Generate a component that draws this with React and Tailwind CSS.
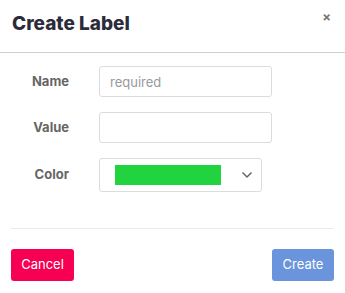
import React from "react";

function CreateLabel() {
  return (
    <div className="w-[345px] h-[293px] bg-white flex flex-col" style={{ fontFamily: "Inter, 'Noto Sans', sans-serif" }}>
      <header className="h-[53px] flex items-start justify-between border-b border-[#cfcfcf] pl-3 pr-[14px]">
        <h1 className="mt-[11px] text-[19px] leading-[26px] font-extrabold text-[#2c2b3b]">Create Label</h1>
        <button className="mt-[11px] text-[13px] leading-[13px] font-bold text-[#777]">×</button>
      </header>

      <main className="flex flex-col gap-[15px] pt-[13px] px-3">
        <div className="flex items-center">
          <label className="w-[57px] text-right text-[13px] font-bold text-[#666]">Name</label>
          <input
            type="text"
            placeholder="required"
            className="ml-[30px] w-[173px] h-[31px] border border-[#dcdcdc] rounded-[3px] px-[10px] text-[13px] text-[#333] placeholder-[#999] outline-none"
          />
        </div>
        <div className="flex items-center">
          <label className="w-[57px] text-right text-[13px] font-bold text-[#666]">Value</label>
          <input
            type="text"
            className="ml-[30px] w-[173px] h-[31px] border border-[#dcdcdc] rounded-[3px] px-[10px] text-[13px] outline-none"
          />
        </div>
        <div className="flex items-center">
          <label className="w-[57px] text-right text-[13px] font-bold text-[#666]">Color</label>
          <div className="ml-[30px] w-[163px] h-[34px] border border-[#dcdcdc] rounded-[3px] flex items-center pl-[15px] pr-[8px]">
            <div className="w-[106px] h-[20px] bg-[#22d340]" />
            <svg className="ml-auto" width="12" height="8" viewBox="0 0 12 8" fill="none">
              <path d="M1.5 1.5 L6 6 L10.5 1.5" stroke="#666" strokeWidth="1.5" />
            </svg>
          </div>
        </div>
      </main>

      <div className="mt-[36px] mx-[11px] border-t border-[#ebebeb]" />

      <footer className="flex justify-between px-[11px] pt-[20px]">
        <button className="w-[63px] h-[32px] rounded-[3px] bg-[#f50052] text-white text-[13px]">Cancel</button>
        <button className="w-[62px] h-[32px] rounded-[3px] bg-[#6a94dc] text-white text-[13px]">Create</button>
      </footer>
    </div>
  );
}

export default function App() {
  return <CreateLabel />;
}
